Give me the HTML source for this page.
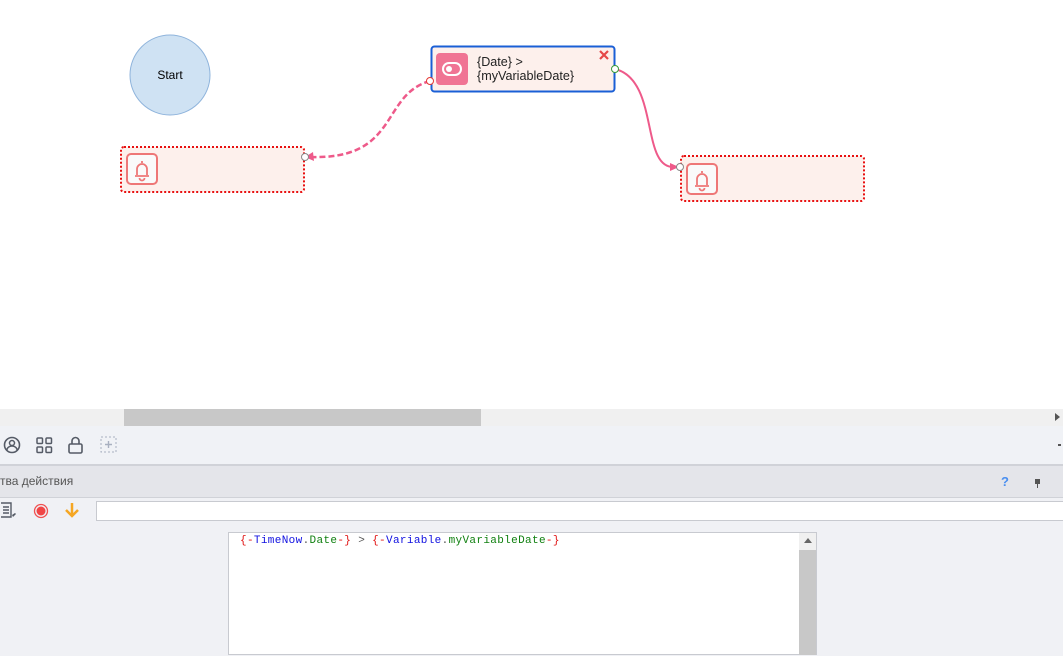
<!DOCTYPE html>
<html><head><style>
body{margin:0;width:1063px;height:655px;overflow:hidden;position:relative;font-family:"Liberation Sans",sans-serif;background:#fff}
.a{position:absolute}
</style></head><body>
<svg class="a" style="left:0;top:0" width="1063" height="409">
<circle cx="170" cy="75" r="40" fill="#cfe2f3" stroke="#8fb4dc" stroke-width="1"/>
<text x="170" y="79" font-size="12" text-anchor="middle" font-family="Liberation Sans" fill="#000">Start</text>
<path d="M430 81 C380 95 400 160 310 157" fill="none" stroke="#ee5a8a" stroke-width="2.5" stroke-dasharray="6,3"/>
<path d="M313 152 L305 157 L314 161 Z" fill="#ee5a8a"/>
<path d="M615 69 C660 80 640 170 675 167" fill="none" stroke="#ee5a8a" stroke-width="2"/>
<path d="M670 163 L679 167 L670 171 Z" fill="#ee5a8a"/>
<rect x="431.5" y="46.5" width="183" height="45" rx="3" fill="#fdf0ec" stroke="#1a5fd6" stroke-width="2"/>
<rect x="436" y="53" width="32" height="32" rx="4" fill="#f07494"/>
<rect x="443" y="63" width="18" height="12" rx="6" fill="none" stroke="#fff" stroke-width="2"/>
<circle cx="449" cy="69" r="3" fill="#fff"/>
<text x="477" y="66" font-size="12.6" fill="#222">{Date} &gt;</text>
<text x="477" y="80" font-size="12.6" fill="#222">{myVariableDate}</text>
<path d="M600 51 l8 8 M608 51 l-8 8" stroke="#e54848" stroke-width="2.2"/>
<circle cx="430" cy="81" r="3.5" fill="#fff" stroke="#e53935"/>
<circle cx="615" cy="69" r="3.5" fill="#fff" stroke="#3a9a3a"/>
<rect x="121" y="147" width="183" height="45" rx="3" fill="#fdf0ec" stroke="#e81010" stroke-width="2" stroke-dasharray="2,2"/>
<rect x="127" y="154" width="30" height="30" rx="4" fill="#fafafa" stroke="#ee7777" stroke-width="2"/>
<path d="M135 176 h14 M137 175 v-6 a5 5 0 0 1 10 0 v6 M142 163 v-2 M139.5 178 a2.5 2.5 0 0 0 5 0" fill="none" stroke="#ee7777" stroke-width="1.8"/>
<circle cx="305" cy="157" r="3.5" fill="#fff" stroke="#888"/>
<rect x="681" y="156" width="183" height="45" rx="3" fill="#fdf0ec" stroke="#e81010" stroke-width="2" stroke-dasharray="2,2"/>
<rect x="687" y="164" width="30" height="30" rx="4" fill="#fafafa" stroke="#ee7777" stroke-width="2"/>
<path d="M695 186 h14 M697 185 v-6 a5 5 0 0 1 10 0 v6 M702 173 v-2 M699.5 188 a2.5 2.5 0 0 0 5 0" fill="none" stroke="#ee7777" stroke-width="1.8"/>
<circle cx="680" cy="167" r="3.5" fill="#fff" stroke="#888"/>
</svg>
<div class="a" style="left:0;top:409px;width:1063px;height:17px;background:#f0f0f0"></div>
<div class="a" style="left:124px;top:409px;width:357px;height:17px;background:#c8c8c8"></div>
<div class="a" style="left:1055px;top:413px;width:0;height:0;border-left:5px solid #555;border-top:4px solid transparent;border-bottom:4px solid transparent"></div>
<div class="a" style="left:0;top:426px;width:1063px;height:38px;background:#f0f2f6"></div>
<svg class="a" style="left:0;top:432px" width="130" height="26">
<circle cx="12" cy="13" r="7.5" fill="none" stroke="#555b66" stroke-width="1.6"/><circle cx="12" cy="11" r="2.5" fill="none" stroke="#555b66" stroke-width="1.5"/><path d="M7 18 a5 4 0 0 1 10 0" fill="none" stroke="#555b66" stroke-width="1.5"/>
<rect x="37" y="6" width="5.5" height="5.5" rx="1" fill="none" stroke="#555b66" stroke-width="1.5"/><rect x="46" y="6" width="5.5" height="5.5" rx="1" fill="none" stroke="#555b66" stroke-width="1.5"/><rect x="37" y="15" width="5.5" height="5.5" rx="1" fill="none" stroke="#555b66" stroke-width="1.5"/><rect x="46" y="15" width="5.5" height="5.5" rx="1" fill="none" stroke="#555b66" stroke-width="1.5"/>
<rect x="69" y="12" width="13" height="9" rx="1.5" fill="none" stroke="#555b66" stroke-width="1.6"/><path d="M72 12 v-3 a3.5 3.5 0 0 1 7 0 v3" fill="none" stroke="#555b66" stroke-width="1.6"/>
<rect x="101" y="5" width="15" height="15" fill="none" stroke="#a8b0c0" stroke-dasharray="2,2"/><path d="M108.5 9 v7 M105 12.5 h7" stroke="#a8b0c0" stroke-width="1.4"/>
</svg>
<div class="a" style="left:1058px;top:444px;width:3px;height:2px;background:#555"></div>
<div class="a" style="left:0;top:464px;width:1063px;height:2px;background:#d0d2d8"></div>
<div class="a" style="left:0;top:466px;width:1063px;height:31px;background:#e4e5ea;font-size:12px;color:#555;line-height:31px">тва действия</div>
<div class="a" style="left:1001px;top:474px;font-size:13px;font-weight:bold;color:#4a8ff0">?</div>
<div class="a" style="left:1035px;top:479px;width:5px;height:5px;background:#555"></div><div class="a" style="left:1037px;top:483px;width:1px;height:5px;background:#555"></div>
<div class="a" style="left:0;top:497px;width:1063px;height:158px;background:#f0f1f5;border-top:1px solid #d0d2d8"></div>
<svg class="a" style="left:0;top:500px" width="90" height="22">
<path d="M1 3 h10 v14 h-10 M3 7 h6 M3 10 h6 M3 13 h6" fill="none" stroke="#555b66" stroke-width="1.4"/><path d="M12 15 l3 -2 l1 1 l-3 3z" fill="#555b66"/>
<circle cx="41" cy="11" r="6.5" fill="none" stroke="#f05050" stroke-width="1.3"/><circle cx="41" cy="11" r="4.5" fill="#f04545"/>
<path d="M72 3 v13 M66 10 l6 6 l6 -6" fill="none" stroke="#f5a623" stroke-width="2.5"/>
</svg>
<div class="a" style="left:96px;top:501px;width:967px;height:18px;background:#fff;border:1px solid #c8cad0"></div>
<div class="a" style="left:228px;top:532px;width:589px;height:123px;background:#fff;border:1px solid #c8cad0;box-sizing:border-box"></div>
<div class="a" style="left:799px;top:533px;width:17px;height:122px;background:#f0f0f0"></div>
<div class="a" style="left:799px;top:550px;width:17px;height:105px;background:#c8c8c8"></div>
<div class="a" style="left:804px;top:538px;width:0;height:0;border-bottom:5px solid #666;border-left:4px solid transparent;border-right:4px solid transparent"></div>
<div class="a" style="left:240px;top:535px;font-family:'Liberation Mono',monospace;font-size:11px;letter-spacing:0.35px;white-space:pre"><span style="color:#e01010">{-</span><span style="color:#1010e0">TimeNow</span><span style="color:#555">.</span><span style="color:#108010">Date</span><span style="color:#e01010">-}</span><span style="color:#555"> &gt; </span><span style="color:#e01010">{-</span><span style="color:#1010e0">Variable</span><span style="color:#555">.</span><span style="color:#108010">myVariableDate</span><span style="color:#e01010">-}</span></div>
</body></html>
